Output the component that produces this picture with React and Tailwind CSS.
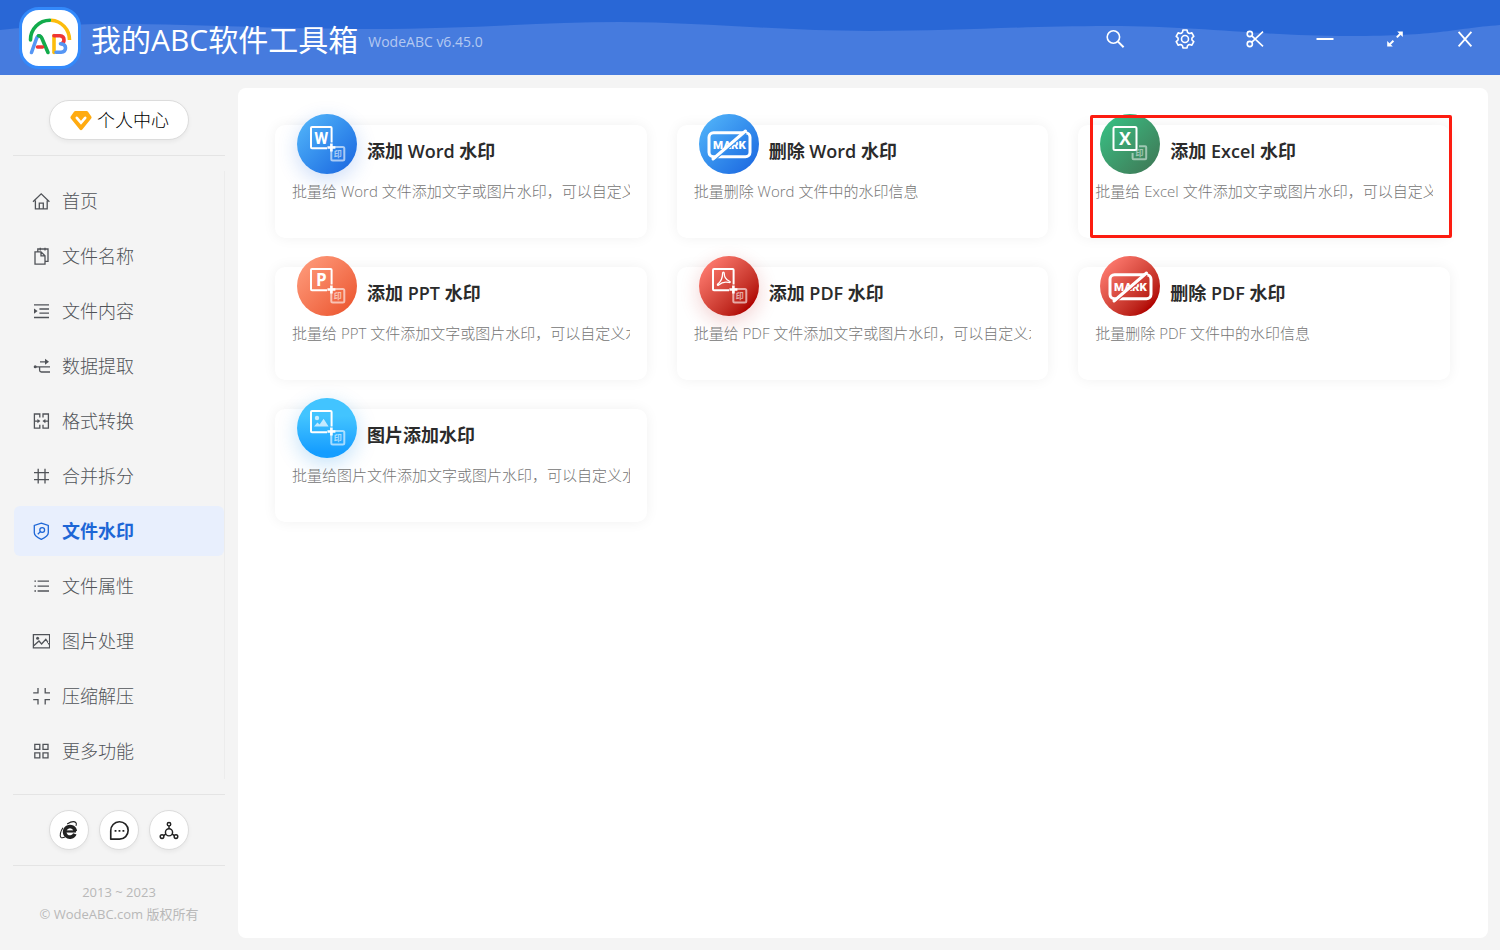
import React, { useState } from 'react';

const toothPoints = Array.from({ length: 6 }).flatMap((_, i) => {
  const base = -90 + i * 60;
  return [[-30, 6.8], [-19, 7.4], [-13, 9.2], [13, 9.2], [19, 7.4]].map(([offset, r]) => {
    const angle = ((base + offset) * Math.PI) / 180;
    return `${(12 + r * Math.cos(angle)).toFixed(2)},${(12 + r * Math.sin(angle)).toFixed(2)}`;
  });
}).join(' ');

const windowButtons = [
  {
    label: '搜索',
    icon: (
      <g>
        <circle cx="10.4" cy="10" r="6.2" />
        <path d="M15 14.6l5.6 5.6" strokeWidth="2" />
      </g>
    )
  },
  {
    label: '设置',
    icon: (
      <g>
        <polygon points={toothPoints} strokeLinejoin="round" />
        <circle cx="12" cy="12" r="3.5" />
      </g>
    )
  },
  {
    label: '截图',
    icon: (
      <g>
        <circle cx="6.8" cy="7" r="2.6" />
        <circle cx="6.8" cy="17" r="2.6" />
        <path d="M8.8 8.8L20 19.4M8.8 15.2L20 4.6" />
      </g>
    )
  },
  { label: '最小化', icon: <path d="M3.5 12h17" strokeWidth="2" /> },
  {
    label: '最大化',
    icon: (
      <g>
        <path d="M13.8 10.4l3.6-3.6M10.4 13.8l-3.6 3.6" strokeWidth="2" />
        <path d="M14.2 4.4h5.6v5.6zM4.2 14v5.6h5.6z" fill="currentColor" stroke="none" />
      </g>
    )
  },
  { label: '关闭', icon: <path d="M5.6 4.8l12.8 14.6M18.4 4.8L5.6 19.4" strokeWidth="1.8" /> }
];

const navItems = [
  {
    name: '首页',
    icon: <path d="M1 9.8l8.2-8 8.2 8M3.4 8.5v8.3h11.8V8.5M7.3 16.8v-5.6h4v5.6" />
  },
  {
    name: '文件名称',
    icon: <path d="M3 4.8h6l4 4v8.4H3zM9 4.8v4h4M5.8 4.8V2H16v12.4h-3M8.3 .8v2.6M13 .8v2.6" />
  },
  {
    name: '文件内容',
    icon: (
      <g>
        <path d="M2 2.8h15M7.4 7h9.6M7.4 11.2h9.6M2 15.5h15" />
        <path d="M2 6.4L5.6 9 2 11.8z" fill="currentColor" stroke="none" />
      </g>
    )
  },
  {
    name: '数据提取',
    icon: (
      <g>
        <path d="M8 4.8h6M3 9.8h15M7.6 9.8v3.4q0 1.8 1.8 1.8H18" />
        <path d="M13 1.8l4 3-4 3z" fill="currentColor" stroke="none" />
        <circle cx="3.2" cy="9.8" r="1.5" fill="currentColor" stroke="none" />
      </g>
    )
  },
  {
    name: '格式转换',
    icon: (
      <g>
        <path d="M7.8 5.4V2H2.4v14.2h5.4v-3.4M11 5.4V2h5.4v14.2H11v-3.4M2.4 9.1h4M16.4 9.1h-4" />
        <path d="M5.4 6.9L8.4 9.1l-3 2.2zM13.4 6.9l-3 2.2 3 2.2z" fill="currentColor" stroke="none" />
      </g>
    )
  },
  { name: '合并拆分', icon: <path d="M2 5.6h15M2 12.6h15M6.2 1.8v14.6M13 1.8v14.6" /> },
  {
    name: '文件水印',
    icon: (
      <g>
        <path d="M9.3 1.2l7 2.2v7.4q0 3.6-7 6.6-7-3-7-6.6V3.4z" />
        <circle cx="10.2" cy="8" r="2.4" />
        <path d="M8.4 9.6l-2.6 2.6" />
      </g>
    )
  },
  {
    name: '文件属性',
    icon: <path d="M5.6 4.2H17M5.6 9.2H17M5.6 14H17M2.4 4.2h1.6M2.4 9.2h1.6M2.4 14h1.6" />
  },
  {
    name: '图片处理',
    icon: (
      <g>
        <path d="M1.4 2.6h16.2v13.2H1.4zM2 13.6l5-4.6 2.6 3 4.2-4.8 3.6 5.4" />
        <circle cx="5.6" cy="6.2" r="1.5" fill="currentColor" stroke="none" />
      </g>
    )
  },
  {
    name: '压缩解压',
    icon: <path d="M1.2 5.8H6V1M18 5.8h-4.8V1M1.2 12.6H6v4.8M18 12.6h-4.8v4.8" />
  },
  {
    name: '更多功能',
    icon: <path d="M2.8 2.4h5v5h-5zM11 2.4h5v5h-5zM2.8 10.8h5v5h-5zM11 10.8h5v5h-5z" />
  }
];

const tools = [
  {
    title: '添加 Word 水印',
    desc: '批量给 Word 文件添加文字或图片水印，可以自定义水印样式',
    circle: 'bg-linear-135 from-[#56b9fb] to-[#1b62de] shadow-[0_6px_20px_rgba(28,99,224,0.22)]',
    glyph: <StampGlyph kind="W" />
  },
  {
    title: '删除 Word 水印',
    desc: '批量删除 Word 文件中的水印信息',
    circle: 'bg-linear-135 from-[#56b9fb] to-[#1b62de]',
    glyph: <MarkGlyph gap="#3a92ee" />
  },
  {
    title: '添加 Excel 水印',
    desc: '批量给 Excel 文件添加文字或图片水印，可以自定义水印样式',
    circle: 'bg-linear-135 from-[#33c688] to-[#3d7453]',
    glyph: <ExcelGlyph />,
    highlighted: true
  },
  {
    title: '添加 PPT 水印',
    desc: '批量给 PPT 文件添加文字或图片水印，可以自定义水印样式',
    circle: 'bg-linear-135 from-[#ff9f80] to-[#e94e25]',
    glyph: <StampGlyph kind="P" />
  },
  {
    title: '添加 PDF 水印',
    desc: '批量给 PDF 文件添加文字或图片水印，可以自定义水印样式',
    circle: 'bg-linear-135 from-[#ff7b70] from-10% to-[#b00000] to-85% shadow-[0_6px_20px_rgba(190,20,20,0.2)]',
    glyph: <StampGlyph kind="pdf" />
  },
  {
    title: '删除 PDF 水印',
    desc: '批量删除 PDF 文件中的水印信息',
    circle: 'bg-linear-135 from-[#ff7b70] from-10% to-[#b00000] to-85%',
    glyph: <MarkGlyph gap="#d53b34" />
  },
  {
    title: '图片添加水印',
    desc: '批量给图片文件添加文字或图片水印，可以自定义水印样式',
    circle: 'bg-linear-to-b from-[#42c4ff] from-30% to-[#149dff] to-90% shadow-[0_6px_20px_rgba(20,140,230,0.25)]',
    glyph: <StampGlyph kind="image" />
  }
];

// Small "印" seal in the lower right of the add-watermark icons
function Seal() {
  return (
    <g opacity="0.6">
      <rect x="34.3" y="33" width="13" height="13.4" rx="1.5" fill="none" stroke="#fff" strokeWidth="2" />
      <text x="40.8" y="43" textAnchor="middle" fontSize="8" fontWeight="700" fill="#fff">印</text>
    </g>
  );
}

function StampGlyph({ kind }) {
  return (
    <svg viewBox="0 0 60 60" className="w-full h-full">
      <path d="M30 34.2H15a1 1 0 0 1-1-1V14a1 1 0 0 1 1-1h18.6a1 1 0 0 1 1 1v14.6" fill="none" stroke="#fff" strokeWidth="2" />
      {kind === 'pdf' && (
        <path
          d="M23.6 17.2c0-1.400 1.600-1.400 1.600 0 0 3.400 2 6.400 5 7.800 1.600.6 1.200 1.800-.4 1.400-3.600-.8-7.200-.2-9.800 2.400-1 1-2.200.2-1.200-.8 3-2.400 4.800-6.400 4.800-10.800z"
          fill="none" stroke="#fff" strokeWidth="1.3"
        />
      )}
      {kind === 'image' && (
        <g fill="#fff" opacity="0.7">
          <circle cx="20" cy="20" r="2.2" />
          <path d="M17 28.6l3.4-4.2 2.2 2 4-5.600 5 7.800z" />
        </g>
      )}
      {kind === 'W' && (
        <text x="24.3" y="29.600" textAnchor="middle" fontSize="16" fontWeight="700" fill="#fff" className="font-[Roboto,sans-serif]">W</text>
      )}
      {kind === 'P' && (
        <text x="24.3" y="29.600" textAnchor="middle" fontSize="17" fontWeight="700" fill="#fff">P</text>
      )}
      <Seal />
      <path d="M34.4 29.5v8M30.4 33.5h8" stroke="#fff" strokeWidth="2.6" />
    </svg>
  );
}

function ExcelGlyph() {
  return (
    <svg viewBox="0 0 60 60" className="w-full h-full">
      <path d="M39 32.2h6.2a1 1 0 0 1 1 1V44.2a1 1 0 0 1-1 1H33.6a1 1 0 0 1-1-1V39" fill="none" stroke="#fff" strokeWidth="2" opacity="0.5" />
      <text x="39.4" y="42.4" textAnchor="middle" fontSize="8" fontWeight="700" fill="#fff" opacity="0.5">印</text>
      <rect x="13.5" y="13" width="23" height="23" rx="1.5" fill="none" stroke="#fff" strokeWidth="2" />
      <text x="25" y="31" textAnchor="middle" fontSize="18" fontWeight="700" fill="#fff">X</text>
    </svg>
  );
}

function MarkGlyph({ gap }) {
  return (
    <svg viewBox="0 0 60 60" className="w-full h-full">
      <rect x="10" y="18.8" width="41" height="24" rx="4.5" fill="none" stroke="#fff" strokeWidth="3" />
      <text x="30.4" y="35" textAnchor="middle" fontSize="11.5" fontWeight="900" fill="#fff" className="font-[Roboto,sans-serif]">MARK</text>
      <path d="M17 44.5L47 19" stroke={gap} strokeWidth="2" />
      <path d="M14 45L46.5 17" stroke="#fff" strokeWidth="3" strokeLinecap="round" />
    </svg>
  );
}

function Logo() {
  return (
    <span className="w-[62px] h-[62px] rounded-[20px] bg-white border-3 border-[#3389fb] overflow-hidden shrink-0">
      <svg viewBox="22 9.5 56 56" className="w-full h-full" fill="none" strokeWidth="3.6" strokeLinecap="round">
        <path d="M30.5 39.5A19.6 19.6 0 0 1 50 19.7" stroke="#12ab4b" />
        <path d="M51 19.7A19.6 19.6 0 0 1 69.5 39.5" stroke="#fcbc0c" strokeLinecap="butt" />
        <path d="M54 35v17" stroke="#fcbc0c" />
        <path d="M54 35.2h6q4 .3 4 4.2 0 2.6-2.4 3.8" stroke="#ef3434" />
        <path d="M56 51.8h5q4.5-.4 4.5-4.3 0-4-5-4.3" stroke="#5596f5" />
        <path d="M31.5 52l5-14q1-2.8 3-2.8" stroke="#5596f5" />
        <path d="M38.5 35.2q2.500 0 3.5 2.8l6 14" stroke="#12ab4b" />
        <path d="M37.5 46.5h5" stroke="#ef3434" />
      </svg>
    </span>
  );
}

function Header() {
  return (
    <header className="h-[75px] shrink-0 relative flex items-center bg-[#2967d6] text-white">
      <svg
        viewBox="0 0 1500 75"
        preserveAspectRatio="none"
        aria-hidden="true"
        className="absolute inset-0 w-full h-full"
      >
        <path d="M0 30C40 26 70 24 110 24 200 24 270 29 370 29S540 22 620 22 780 31 870 31 1020 26 1110 26 1260 36 1350 36 1450 29 1500 25V75H0z" fill="#467bde" />
      </svg>
      <div className="relative flex items-center flex-1 pl-[19px]">
        <Logo />
        <h1 className="ml-2.5 mt-1 text-[30px] leading-10 font-normal whitespace-nowrap">我的ABC软件工具箱</h1>
        <span className="ml-2.5 mt-2 text-sm text-white/60 whitespace-nowrap">WodeABC v6.45.0</span>
      </div>
      <div className="relative flex">
        {windowButtons.map((btn) => (
          <button key={btn.label} type="button" aria-label={btn.label} className="w-[70px] h-[75px] flex items-center justify-center">
            <svg viewBox="0 0 24 24" className="w-6 h-6 mt-0.5" fill="none" stroke="currentColor" strokeWidth="1.6">
              {btn.icon}
            </svg>
          </button>
        ))}
      </div>
    </header>
  );
}

function Sidebar({ active, onSelect }) {
  return (
    <aside className="w-[238px] shrink-0 px-[13px] flex flex-col">
      <div className="h-[81px] pt-[25px] border-b border-[#e4e4e4]">
        <button
          type="button"
          className="mx-auto w-[140px] h-10 rounded-full bg-white border border-[#dcdcdc] shadow-[0_2px_4px_rgba(0,0,0,0.05)] flex items-center justify-center gap-1 text-lg font-light text-black"
        >
          <svg viewBox="0 0 24 24" className="w-6 h-6" aria-hidden="true">
            <path d="M6.5 3h11q1 0 1.5.8l3.300 4.700q.7 1-.1 2L13.3 21.600q-1.300 1.400-2.600 0L1.800 10.500q-.8-1-.1-2L5 3.8q.5-.8 1.5-.8z" fill="#ffab11" />
            <path d="M7.8 9.8l4.200 5 4.200-5" fill="none" stroke="#fff" strokeWidth="2.600" strokeLinecap="round" />
          </svg>
          个人中心
        </button>
      </div>

      <nav className="flex-1 my-[15px] pt-[5px] flex flex-col gap-[5px] border-r border-[#ececec]">
        {navItems.map((item) => (
          <button
            key={item.name}
            type="button"
            onClick={() => onSelect(item.name)}
            className={`h-[50px] ml-px pl-[18px] flex items-center gap-3 rounded-md text-lg ${
              active === item.name
                ? 'bg-[#e8effd] text-[#1d66d6] font-bold'
                : 'text-[#505358] font-light'
            }`}
          >
            <svg viewBox="0 0 18 18" className="w-[18px] h-[18px]" fill="none" stroke="currentColor" strokeWidth="1.3">
              {item.icon}
            </svg>
            {item.name}
          </button>
        ))}
      </nav>

      <div className="h-[71px] border-t border-[#e4e4e4] flex items-center justify-center gap-2.5 text-[#222]">
        <RoundButton label="官方网站">
          <path d="M19.6 13.6H8" strokeWidth="2.4" />
          <path d="M18.4 16.2A5.8 5.8 0 1 1 18.8 13.400" strokeWidth="4" />
          <path d="M10 5.400c3.600-2.200 7.800-3 9.400-1.600.9.800.8 2.200.2 3.700M5.400 9.500C2.600 13.500 1.600 18.200 3.200 20c1 .9 3 .4 5-.8" strokeWidth="1.2" />
        </RoundButton>
        <RoundButton label="在线客服">
          <path d="M3 22V12.8a9.500 9.500 0 1 1 9.500 9.200z" strokeWidth="1.8" strokeLinejoin="round" />
          <path d="M7.2 13h2M11.500 13h2M15.800 13h2" strokeWidth="2" />
        </RoundButton>
        <RoundButton label="分享">
          <circle cx="12" cy="14.500" r="3.900" />
          <circle cx="12" cy="5.600" r="1.900" />
          <circle cx="4.400" cy="19.200" r="2" />
          <circle cx="19.600" cy="19.200" r="2" />
          <path d="M12 7.500v3.100M8.600 16.500l-2.500 1.500M15.400 16.500l2.500 1.500" />
        </RoundButton>
      </div>

      <footer className="border-t border-[#e4e4e4] pt-[15px] pb-[25px] text-center text-[13px] leading-[22px] text-[#b8b8b8]">
        <p>2013 ~ 2023</p>
        <p>© WodeABC.com 版权所有</p>
      </footer>
    </aside>
  );
}

function RoundButton({ label, children }) {
  return (
    <button
      type="button"
      aria-label={label}
      className="w-10 h-10 rounded-full bg-white border border-[#dcdcdc] shadow-[0_2px_4px_rgba(0,0,0,0.05)] flex items-center justify-center"
    >
      <svg viewBox="0 0 24 24" className="w-[22px] h-[22px]" fill="none" stroke="currentColor" strokeWidth="1.6">
        {children}
      </svg>
    </button>
  );
}

function ToolCard({ tool }) {
  return (
    <a
      href="#"
      className="relative block h-[113px] px-[17px] rounded-[10px] bg-white shadow-[0_0_14px_rgba(0,0,0,0.06)]"
    >
      <div className="flex pl-[5px]">
        <span className={`-mt-[11px] w-[60px] h-[60px] rounded-full shrink-0 ${tool.circle}`}>
          {tool.glyph}
        </span>
        <h2 className="ml-2.5 mt-3 text-lg leading-7 font-semibold text-[#2b2b2b] whitespace-nowrap">{tool.title}</h2>
      </div>
      <p className="mt-[7px] text-[15px] leading-5 font-light text-[#757575] whitespace-nowrap overflow-hidden">
        {tool.desc}
      </p>
      {tool.highlighted && (
        <span className="absolute left-3 -right-0.5 -top-2.5 bottom-0 border-3 border-[#fc1c10] rounded-xs" />
      )}
    </a>
  );
}

export default function App() {
  const [active, setActive] = useState('文件水印');

  return (
    <div className="min-h-screen flex flex-col bg-[#f4f4f4] font-['Open_Sans','Noto_Sans_CJK_SC',sans-serif]">
      <Header />
      <div className="flex-1 flex">
        <Sidebar active={active} onSelect={setActive} />
        <main className="flex-1 min-w-0 mt-[13px] mr-3 mb-3 py-[37px] pl-[37px] pr-[38px] rounded-lg bg-white">
          <div className="grid grid-cols-3 gap-x-[30px] gap-y-[29px]">
            {tools.map((tool) => (
              <ToolCard key={tool.title} tool={tool} />
            ))}
          </div>
        </main>
      </div>
    </div>
  );
}
